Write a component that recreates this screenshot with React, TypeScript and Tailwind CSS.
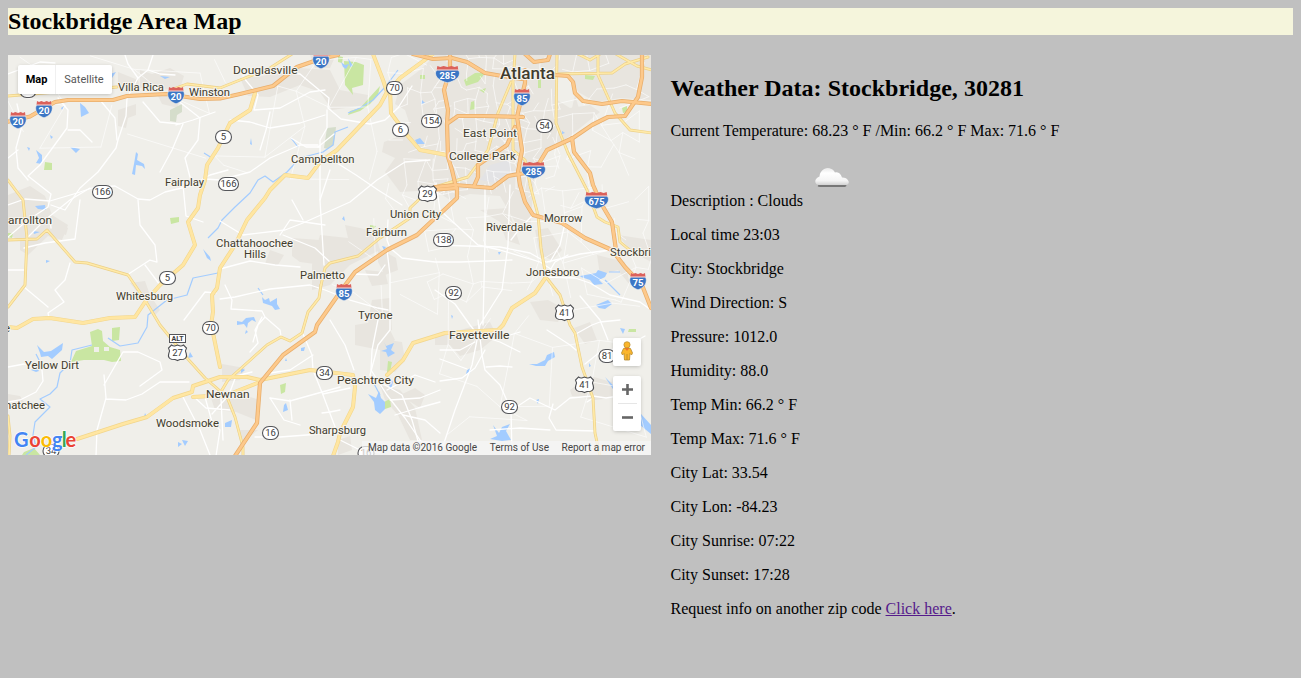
import React from "react";

/* ---------- map geometry, in page-aligned units ---------- */

const motorways: string[] = [
  "M8 121.7L30 116.5L55 102L68 100L113 100L127 96L167 94L200 99L220 98.5L240 94L273 86L297 67L320 59L338 55",
  "M413 54L433 59L452 58L467 62L485 73L502 76L522 79M555 75L568 76L573 82L575 93L583 101L602 104L622 101L652 104",
  "M450 54L450 70L444 90L448 110L447 123L448 157L452 170L456 187",
  "M448 123L458 116L482 116L523 117",
  "M525 70L525 83L517 117L522 150L518 172L520 185L525 202L533 215L562 223L585 238L612 250L625 267L642 285L651 308",
  "M515 127L507 145L478 165L478 177L474 186",
  "M435 187L455 185L492 188L508 176L525 173L538 165L547 150L573 138L592 125L608 117L625 116L638 97L642 77L642 54",
  "M572 138L574 152L590 173L593 185L602 205L612 222L616 250",
  "M430 190L457 188L457 198L442 212L433 220L417 235L387 250L355 272L343 288L317 325L315 332L283 355L260 383L257 423L235 456",
  "M525 54L534 62L548 60L550 54",
];

const highways: string[] = [
  "M373 54L383 80L387 92L380 105L337 150L320 162L308 178L285 175L270 190L265 198L247 220L235 245L220 268L217 288L212 295L213 312L211 325L213 333L220 367",
  "M433 54L400 78L390 90L391 113L407 135L420 150L447 155",
  "M255 93L250 110L230 123L218 148L207 165L205 180L200 195L198 208L188 222L195 245L183 265L160 285L145 302L135 317L110 318L83 323L50 318L33 319L17 328L8 327",
  "M77 439L123 424L147 417L173 398L192 392L193 386L220 377L247 377L260 380L310 370L353 375L355 387L353 407L340 433L338 442L333 456",
  "M260 382L227 395L193 397",
  "M387 375L403 360L413 343L445 333L498 330L503 325L512 308L535 293L546 277",
];

const secondary: string[] = [
  "M292 54L270 68L245 78L220 88L187 84L176 88M117 87L8 96",
  "M8 180L23 200L27 238L25 285L8 307",
  "M8 240L37 239L47 230L75 262L87 263L128 275L145 300L160 325L187 358L205 378L227 397L235 417L243 447L243 456",
  "M321 285L319 298L308 312L302 333L290 341L281 337L267 345L228 380L222 390",
  "M321 285L325 268L330 263L358 256L380 238L410 218L410 208L427 192L453 184",
  "M530 185L538 215L541 248L546 277L560 295L570 325L575 333L582 367L593 398L595 433L600 456",
  "M515 54L513 82L513 150L525 160L531 188",
  "M511 82L498 113L488 150L468 177L435 187",
  "M557 54L556 123L568 153L587 190L597 217L605 222L618 227L620 242L632 252",
  "M555 74L612 73L625 64L648 57M598 54L598 75L615 113L630 130L652 133M578 54L590 60L600 54M616 54L637 66L652 70",
  "M8 416L10 436L9 456",
];

const minor: string[] = [
  "M8 205L25 199L50 201L77 193L95 187L115 186L138 199L150 200L165 192L190 186L210 175L228 170",
  "M27 238L45 220L70 200L90 188",
  "M8 237L28 220L48 207L51 194L28 176L40 165L67 128L68 110L58 98",
  "M50 218L51 228M51 205L65 210L80 188L98 172L116 148L118 140L126 116L127 98L138 78L128 64L125 55",
  "M117 140L115 118L100 100M68 130L80 130L92 142M17 104L22 126L16 148L18 168L28 180",
  "M138 78L148 70L153 55M148 70L160 74L175 75M177 100L200 118L198 140L185 158L192 185",
  "M183 124L172 150L160 172M176 125L193 120L215 112M143 102L160 122L180 124",
  "M127 275L150 260L157 262L155 245L140 225L138 200M8 270L24 270M24 248L45 243L75 239L80 200",
  "M70 263L65 280L55 290L64 302L48 313L49 318M24 287L48 307",
  "M183 185L186 216L203 222M184 320L205 292L216 293M160 285L145 265",
  "M104 375L106 398L97 430L96 456M104 385L123 352L138 352L160 362L162 370L140 386M106 399L126 400L142 394L160 382L189 382",
  "M8 367L24 364L42 370L43 381L36 392L20 400L8 402M183 397L200 430L210 455M205 397L212 422L220 430L216 456",
  "M192 395L206 408L230 410M228 396L212 414M228 397L236 376L252 372M221 399L223 440",
  "M243 75L264 70L300 74L318 89L329 98L328 108L341 119L370 124L385 120L398 108L412 86",
  "M327 110L327 128L320 140L320 200L324 265",
  "M318 147L334 134M318 145L300 145L270 158L250 172L220 180L205 179",
  "M320 147L306 147L291 138M337 163L356 175L378 190L402 205",
  "M220 221L243 235L285 230L303 223L350 202L377 180L405 162L430 160",
  "M325 225L290 220L280 235M283 235L315 248L330 262M220 269L250 261L275 265L300 267",
  "M231 309L262 311L265 317L280 330L281 336M262 317L255 330L258 343L250 352M225 285L232 300L231 309M265 317L258 325L253 342",
  "M220 299L235 297L270 289L310 285L325 290L350 300L378 308L388 310",
  "M388 220L387 240L390 248L402 258L418 260L435 262L460 262L512 260",
  "M387 250L390 275L390 330L378 345L370 375L372 380",
  "M355 274L378 275L385 265M320 200L330 170M303 220L292 200",
  "M303 334L312 355L313 370L323 395L340 440L360 450L380 453",
  "M313 355L290 370L270 373M323 394L350 388M270 398L290 401L340 387M322 413L330 412L340 410",
  "M255 437L280 437L320 434L338 432M270 398L284 420L300 425M292 420L290 400",
  "M330 320L345 345L354 370M378 320L372 350L371 370L387 395L405 418L420 440L430 455",
  "M387 390L415 375L435 382M390 400L420 398L440 390M395 415L418 408L440 402",
  "M380 382L402 395L412 420L418 441L440 444M403 415L425 420L440 433",
  "M436 183L440 210L478 245L500 250L540 262L560 275",
  "M485 185L485 240L483 325M510 185L508 245L502 290L480 325L472 365L455 410L445 440L440 455",
  "M435 245L500 247L530 253L546 262M478 320L482 355L485 370L500 385L511 410L512 455",
  "M435 290L455 304L470 325L478 335L500 342L520 352M480 336L510 335L520 332",
  "M440 381L462 378L475 368L485 350M565 223L560 245L550 262M533 215L520 228L511 240",
  "M547 262L580 254L610 250M546 277L575 278L590 283L610 295L640 302L651 310",
  "M546 277L555 262L568 255M512 410L530 398L555 410L570 398L593 396L606 398L625 395",
  "M585 364L600 352L625 347L645 336M574 335L592 325L600 322L620 320M593 398L587 402",
  "M553 404L549 418L556 430L596 431M490 430L520 428L550 430M580 296L600 320L608 340",
  "M486 367L500 366L512 367M467 369L440 359M475 342L460 350L440 350M547 330L570 345L576 350",
  "M8 74L40 62L55 63M18 150L8 158M230 120L250 122L270 128L300 123L325 115",
  "M243 77L258 95L254 110L280 108L310 92L325 90M270 112L266 130L260 150",
];

type Region = { x: number; y: number; w: number; h: number; step: number; seed: number };
const streetRegions: Region[] = [
  { x: 437, y: 50, w: 120, h: 145, step: 10, seed: 7 },
  { x: 557, y: 50, w: 100, h: 160, step: 17, seed: 21 },
  { x: 392, y: 60, w: 48, h: 150, step: 15, seed: 5 },
  { x: 430, y: 195, w: 225, h: 105, step: 20, seed: 13 },
  { x: 435, y: 310, w: 215, h: 145, step: 40, seed: 3 },
  { x: 345, y: 220, w: 90, h: 110, step: 28, seed: 17 },
  { x: 225, y: 60, w: 160, h: 140, step: 40, seed: 11 },
  { x: 15, y: 60, w: 205, h: 130, step: 44, seed: 9 },
];

function streetNetwork({ x, y, w, h, step, seed }: Region): string {
  let s = seed * 7919;
  const rnd = () => {
    s = (s * 1103515245 + 12345) % 2147483648;
    return s / 2147483648;
  };
  const cols = Math.floor(w / step);
  const rows = Math.floor(h / step);
  const pts: number[][][] = [];
  for (let r = 0; r <= rows; r++) {
    pts.push([]);
    for (let c = 0; c <= cols; c++) {
      pts[r].push([x + (c + (rnd() - 0.5) * 0.9) * step, y + (r + (rnd() - 0.5) * 0.9) * step]);
    }
  }
  let d = "";
  const f = (p: number[]) => p[0].toFixed(1) + " " + p[1].toFixed(1);
  for (let r = 0; r <= rows; r++) {
    for (let c = 0; c <= cols; c++) {
      if (c < cols && rnd() > 0.38) d += `M${f(pts[r][c])}L${f(pts[r][c + 1])}`;
      if (r < rows && rnd() > 0.38) d += `M${f(pts[r][c])}L${f(pts[r + 1][c])}`;
    }
  }
  return d;
}

const urban: string[] = [
  "M435 55H557V100L570 108L590 105L600 112L570 136L548 150L535 168L530 230L515 222L500 196L470 194L450 200L435 190L400 192L385 172L395 158L382 152L384 142L400 136L410 125L405 110L395 104L400 85L420 70Z",
  "M557 55H651V100L620 98L596 102L578 92L572 76L557 73Z",
  "M575 95L580 112L578 125L570 118L572 108Z",
  "M140 70L152 74L170 68L184 76L180 88L160 90L140 88ZM118 72L138 80L140 90L118 88ZM158 96L180 94L178 108L162 104ZM118 110L136 104L136 115L128 118L126 128L118 126Z",
  "M8 195L30 186L45 196L52 215L68 225L62 240L48 236L28 255L20 250L20 240L8 235ZM60 223L68 228L66 235L58 232Z",
  "M240 78L262 76L300 68L330 70L340 90L368 95L366 105L332 110L320 92L300 85L270 97L248 96ZM310 55L335 57L330 68L315 68Z",
  "M292 238L320 240L322 265L300 262L292 256ZM320 235L348 238L345 225L360 228L375 232L380 250L350 265L330 285L312 290L312 265ZM270 250L284 255L278 265L265 264Z",
  "M378 248L396 258L398 270L385 275L378 262ZM365 270L385 272L388 284L372 286ZM372 300L390 298L392 330L378 335L368 322Z",
  "M355 325L385 320L395 340L380 350L355 345ZM388 340L402 342L405 360L395 372L380 370L380 350ZM380 385L400 390L415 408L422 440L410 440L398 415L385 400ZM400 395L415 388L425 395L420 408Z",
  "M460 330L490 322L497 336L480 350L460 356L450 345L435 345L435 336ZM530 302L548 300L563 308L558 322L540 320Z",
  "M574 328L590 322L597 340L585 344ZM570 390L590 376L612 382L612 398L595 400L572 396ZM535 230L548 228L562 250L552 260L540 255ZM480 210L508 208L512 220L520 245L506 240L500 222Z",
  "M597 255L625 262L630 285L618 270L600 275ZM618 235L651 240V262L630 250Z",
  "M222 364L245 368L240 380L222 382ZM210 395L240 394L260 400L256 420L236 412L215 410ZM240 430L258 430L240 445Z",
  "M130 283L145 281L150 295L160 310L155 315L145 302ZM338 440L350 436L352 450L338 455ZM8 394L20 396L24 402L14 410L8 408Z",
];

const greens: string[] = [
  "M344 61L356 62L364 65L363 85L352 88L353 95L345 85Z",
  "M338 56L343 57L342 63L338 62ZM464 80L475 73L486 72L478 82L466 86ZM471 102L474 101L475 109L470 110ZM538 80L541 79L541 88L538 88ZM472 85L480 90L486 88L484 93Z",
  "M380 86L378 95L370 104L360 111L348 115L350 111L360 108L369 98Z",
  "M45 162L52 163L52 170L44 170ZM170 218L179 217L179 222L171 224Z",
  "M90 332L98 329L102 331L103 341L110 347L120 350L121 361L112 362L104 360L84 360L71 362L76 351L92 346ZM112 328L120 327L119 340L112 341Z",
  "M8 233L13 233L12 238L8 237ZM388 361L392 362L390 372L387 372ZM384 402L390 399L391 407L385 409ZM280 385L286 383L285 392L281 394ZM370 225L376 226L374 229L370 228Z",
  "M24 452L34 448L40 455H22ZM629 329H636V332H628ZM585 75L595 76L593 80L585 79ZM420 75L425 75L425 79L420 79ZM622 108L627 106L627 112L623 113Z",
];

const palegreens = "M170 110L182 104L182 112L177 115L176 122L170 121ZM327 128L336 127L334 145L328 149L324 148Z";

const lakes: string[] = [
  "M80 103L85 107L89 113L81 117ZM110 74L116 72L112 78ZM160 76L170 77L165 79ZM27 147L30 148L29 151ZM36 150L42 155L42 164L36 163L39 158Z",
  "M136 152L138 154L137 160L144 164L145 169L142 166L136 165L135 175L132 174L134 164ZM70 147L80 149L76 153ZM50 135L53 137L51 139ZM61 108L64 106L62 110Z",
  "M35 206L45 205L46 210L38 209ZM33 231L40 232L34 234ZM46 260L50 261L46 263ZM37 345L44 352L51 351L63 343L62 350L52 359L48 356L41 357L40 353Z",
  "M31 370L36 367L39 371L36 372ZM203 249L210 257L211 261L207 258ZM341 62L345 65L349 64L346 69L343 67ZM348 58L353 66L350 67ZM251 138L252 145L250 144Z",
  "M262 297L265 300L269 298L270 302L277 298L277 304L280 309L275 310L272 306L263 303ZM237 321L242 322L246 318L254 317L256 322L252 320L248 323L247 328L244 324L237 325ZM246 330L248 332L245 334ZM301 348L305 347L304 351L301 351Z",
  "M284 405L286 403L288 410L283 412ZM384 342L386 346L394 343L391 350L395 353L388 357L386 352L381 351L387 349Z",
  "M368 394L376 398L379 391L381 398L385 402L385 409L380 414L375 410L374 402Z",
  "M390 377L393 382L391 390L389 385ZM415 140L420 138L425 144L417 144ZM422 100L425 103L421 104ZM451 315L453 316L452 319ZM498 252L501 252L499 255Z",
  "M580 276L596 273L598 270L607 273L605 277L599 280L603 284L594 285L590 280L581 277ZM596 305L608 300L612 304L605 309L599 308ZM562 131L565 133L562 134Z",
  "M529 364L537 364L545 360L547 355L554 352L555 357L548 361L545 366L536 366ZM620 328L625 329L623 334ZM493 425L499 433L502 427L510 424L506 431L511 440L502 441L490 439L497 436Z",
  "M605 377L641 414L651 425V434L640 425L632 418ZM589 363L591 366L589 367ZM536 400L539 399L538 404ZM467 370L471 368L470 373L466 374ZM182 440L188 441L185 446ZM178 442L182 444L178 447Z",
  "M190 352L193 357L188 358ZM145 413L147 417L144 417ZM286 358L287 361L285 361ZM240 445L243 447L240 448ZM344 216L345 221L342 219ZM382 246L386 247L384 250Z",
  "M225 423L232 420L231 427L225 427ZM241 368L245 370L241 373ZM238 323L236 327",
];

const rivers: string[] = [
  "M398 70L386 86L373 100L360 108L348 113M348 127L335 132L333 145L323 152L300 158L287 172L273 182L265 176L258 180L250 193L235 207L222 220L218 228L208 238",
  "M218 273L193 278L187 295L167 300L148 315L147 327L138 343L120 346L108 338",
  "M92 345L72 350L70 363L60 373L57 387L50 394L40 399L50 407L35 422L33 435L36 447L26 455",
  "M36 354L40 362L38 370M263 295L258 288M380 395L372 380M605 280L620 295M291 138L298 147M630 404L622 395M204 153L212 158M376 110L382 100M620 272L609 272",
];

type Label = { t: string; x: number; y: number; w: number; size?: number };
const labels: Label[] = [
  { t: "Douglasville", x: 233, y: 74, w: 64.5 },
  { t: "Villa Rica", x: 118, y: 91, w: 46 },
  { t: "Winston", x: 189, y: 96, w: 41 },
  { t: "Campbellton", x: 291, y: 163, w: 63.5 },
  { t: "Fairplay", x: 165, y: 186, w: 39 },
  { t: "East Point", x: 463, y: 137, w: 54 },
  { t: "College Park", x: 449, y: 160, w: 67 },
  { t: "arrollton", x: 8, y: 224, w: 44 },
  { t: "Union City", x: 390, y: 218, w: 51 },
  { t: "Fairburn", x: 366, y: 236, w: 41 },
  { t: "Chattahoochee", x: 216, y: 247, w: 77 },
  { t: "Hills", x: 244, y: 258, w: 22 },
  { t: "Riverdale", x: 486, y: 231, w: 46 },
  { t: "Morrow", x: 544, y: 222, w: 38.5 },
  { t: "Stockbri", x: 610, y: 256, w: 41 },
  { t: "Jonesboro", x: 526, y: 276, w: 53.5 },
  { t: "Palmetto", x: 300, y: 279, w: 45 },
  { t: "Whitesburg", x: 116, y: 300, w: 57 },
  { t: "Tyrone", x: 358, y: 319, w: 34.5 },
  { t: "Fayetteville", x: 449, y: 339, w: 60.5 },
  { t: "Yellow Dirt", x: 25, y: 369, w: 54 },
  { t: "Peachtree City", x: 337, y: 384, w: 77 },
  { t: "Newnan", x: 206, y: 398, w: 43.5 },
  { t: "hatchee", x: 5, y: 409, w: 40 },
  { t: "e", x: 4, y: 332, w: 6 },
  { t: "Woodsmoke", x: 156, y: 427, w: 63 },
  { t: "Sharpsburg", x: 309, y: 434, w: 57 },
  { t: "Atlanta", x: 500, y: 79, w: 55, size: 16 },
];

const routes: [string, number, number][] = [
  ["5", 223.5, 137], ["70", 394.5, 88], ["6", 400.5, 130], ["154", 431.5, 121], ["54", 544.5, 126],
  ["166", 228.5, 184], ["166", 102.5, 192], ["138", 443.5, 240], ["5", 167.5, 278], ["92", 453.5, 293],
  ["70", 210.5, 328], ["81", 607, 356], ["34", 324.5, 373], ["92", 509.5, 407], ["16", 270.5, 433],
  ["34", 51, 451], ["16", 366, 453], ["8", 28, 91],
];
const usRoutes: [string, number, number][] = [
  ["29", 427.5, 193.5], ["41", 564.5, 312.5], ["27", 177.5, 352.5], ["41", 584.5, 384.5],
];
const interstates: [string, number, number][] = [
  ["20", 18, 120], ["20", 44, 109], ["20", 176, 95], ["20", 321, 60], ["285", 447.5, 74], ["85", 522, 97],
  ["285", 533.5, 170], ["675", 596.5, 200], ["75", 638, 281], ["85", 344, 292],
];

function Interstate({ n, x, y }: { n: string; x: number; y: number }) {
  const k = n.length > 2 ? 1.45 : 1;
  return (
    <g transform={`translate(${x} ${y})`}>
      <g transform={`scale(${k} 1)`}>
        <path d="M-7 -5L-8.2 -2C-8.8 3 -5.5 7 0 8.7C5.500 7 8.800 3 8.200 -2L7 -5Z" fill="#3b76c5" stroke="#f5f3ee" strokeWidth=".5" />
        <path d="M-7.500 -3.800L-7 -8L-5 -7L-2.700 -8L0 -7L2.700 -8L5 -7L7 -8L7.500 -3.800Z" fill="#db615b" />
        <path d="M-7.700 -4H7.700" stroke="#fff" strokeWidth=".8" />
      </g>
      <text y="4.600" textAnchor="middle" fill="#fff" fontSize="9.500" fontWeight="700" textLength={n.length > 2 ? 16 : 11} lengthAdjust="spacingAndGlyphs">{n}</text>
    </g>
  );
}

function StateRoute({ n, x, y }: { n: string; x: number; y: number }) {
  const w = n.length > 2 ? 20 : 16;
  return (
    <g>
      <rect x={x - w / 2} y={y - 6.5} width={w} height="13" rx="6.500" fill="#fff" stroke="#55565a" strokeWidth="1.100" />
      <text x={x} y={y + 3.4} textAnchor="middle" fill="#3c3c3c" fontSize="9.500">{n}</text>
    </g>
  );
}

function UsRoute({ n, x, y }: { n: string; x: number; y: number }) {
  return (
    <g transform={`translate(${x} ${y})`}>
      <path d="M-6 -7.500Q-4 -6 -2 -6.800L0 -7.500L2 -6.800Q4 -6 6 -7.500L9 -4.500Q7.300 -2 8.700 1Q10 5.500 6 6.800Q2 6.800 0 8Q-2 6.800 -6 6.800Q-10 5.500 -8.700 1Q-7.300 -2 -9 -4.500Z" fill="#fff" stroke="#4c4d50" strokeWidth="1.100" />
      <text y="3.800" textAnchor="middle" fill="#3c3c3c" fontSize="9.500">{n}</text>
    </g>
  );
}

/* letter, colour, left edge */
const LOGO: [string, string, number][] = [
  ["G", "#4285f4", 14], ["o", "#ea4335", 29.3], ["o", "#fbbc05", 40.7], ["g", "#4285f4", 52], ["l", "#34a853", 61.8], ["e", "#ea4335", 65.6],
];

function MapDrawing() {
  return (
    <svg className="block font-[Roboto,sans-serif]" width="643" height="400" viewBox="8 55 643 400">
      <rect x="8" y="55" width="643" height="400" fill="#f0efea" />
      <g fill="#e8e5df">{urban.map((d, i) => <path key={i} d={d} />)}</g>
      <path d="M480 180L490 165L508 160L514 172L500 184Z" fill="#e3e3e5" />
      <path d={palegreens} fill="#d5ddcb" />
      <g fill="#c9e6a2">{greens.map((d, i) => <path key={i} d={d} />)}</g>
      <path d="M94 347H99V352H94ZM104 347H109V351H104Z" fill="#f0efea" />
      <g fill="#a3ccff">{lakes.map((d, i) => <path key={i} d={d} />)}</g>
      <g fill="none" stroke="#a3ccff" strokeWidth="1.200" strokeLinejoin="round">{rivers.map((d, i) => <path key={i} d={d} />)}</g>
      <g fill="none" stroke="#fff" strokeLinejoin="round" strokeLinecap="round">
        <g strokeWidth=".9" opacity=".7">{streetRegions.map((r, i) => <path key={i} d={streetNetwork(r)} />)}</g>
        <g strokeWidth="1.300">{minor.map((d, i) => <path key={i} d={d} />)}</g>
      </g>
      <g fill="none" strokeLinejoin="round" strokeLinecap="round">
        <g stroke="#ecd088" strokeWidth="2.900">{secondary.map((d, i) => <path key={i} d={d} />)}</g>
        <g stroke="#f2d68c" strokeWidth="4">{highways.map((d, i) => <path key={i} d={d} />)}</g>
        <g stroke="#ffeaa8" strokeWidth="1.600">{secondary.map((d, i) => <path key={i} d={d} />)}</g>
        <g stroke="#ffe6a2" strokeWidth="2.800">{highways.map((d, i) => <path key={i} d={d} />)}</g>
        <g stroke="#e8ae6c" strokeWidth="4.200">{motorways.map((d, i) => <path key={i} d={d} />)}</g>
        <g stroke="#fdc98b" strokeWidth="2.700">{motorways.map((d, i) => <path key={i} d={d} />)}</g>
      </g>
      {routes.map(([n, x, y], i) => <StateRoute key={i} n={n} x={x} y={y} />)}
      {usRoutes.map(([n, x, y], i) => <UsRoute key={i} n={n} x={x} y={y} />)}
      <rect x="169.500" y="334.500" width="16" height="8" fill="#fff" stroke="#55565a" />
      <text x="177.500" y="341.300" fontSize="7" fontWeight="700" textAnchor="middle" fill="#3c3c3c">ALT</text>
      {interstates.map(([n, x, y], i) => <Interstate key={i} n={n} x={x} y={y} />)}
      <g fill="#413c2d" stroke="#f6f4ef" strokeWidth="2.200" strokeLinejoin="round" paintOrder="stroke">
        {labels.map((l) => (
          <text key={l.t} x={l.x} y={l.y} fontSize={l.size ?? 11} fontWeight={l.size ? 500 : 400} textLength={l.w} lengthAdjust="spacingAndGlyphs">{l.t}</text>
        ))}
      </g>
      <text className="font-[Lato,sans-serif]" y="447.300" fontSize="20" fontWeight="700" stroke="#fff" strokeWidth="1.600" strokeOpacity=".8" paintOrder="stroke">
        {LOGO.map(([c, fill, x], i) => <tspan key={i} x={x} fill={fill}>{c}</tspan>)}
      </text>
    </svg>
  );
}

function Pegman() {
  return (
    <svg className="mb-0.5" width="14" height="20" viewBox="0 0 14 20">
      <path d="M3.500 7.500Q7 5.500 10.500 7.500L12.500 12L11.500 14L10 12.500L9.500 19H4.500L4 12.500L2.500 14L1.500 12Z" fill="#fbb62c" stroke="#b5892f" strokeWidth=".8" />
      <circle cx="7" cy="3.800" r="3.100" fill="#fbb62c" stroke="#b5892f" strokeWidth=".7" />
      <path d="M4.500 7L7 10L9.500 7Z" fill="#e9782c" />
      <path d="M7 13V19" stroke="#b5892f" strokeWidth=".8" />
    </svg>
  );
}

function StockbridgeMap() {
  return (
    <div className="relative h-[400px] w-[643px] shrink-0 overflow-hidden font-[Roboto,sans-serif]">
      <MapDrawing />
      <div className="absolute left-[10px] top-[10px] flex h-[29px] items-center rounded-[2px] bg-white text-[11px] leading-[29px] shadow-[0_1px_4px_-1px_rgba(0,0,0,0.3)]">
        <span className="w-[38px] border-r border-[#f0f0f0] text-center font-bold text-black">Map</span>
        <span className="w-[56px] text-center text-[#565656]">Satellite</span>
      </div>
      <div className="absolute left-[605px] top-[283px] flex size-[28px] items-center justify-center rounded-[2px] bg-white shadow-[0_1px_4px_-1px_rgba(0,0,0,0.3)]">
        <Pegman />
      </div>
      <div className="absolute left-[605px] top-[321px] flex h-[55px] w-[28px] flex-col items-center rounded-[2px] bg-white shadow-[0_1px_4px_-1px_rgba(0,0,0,0.3)]">
        <svg width="28" height="27" viewBox="0 0 28 27"><path d="M9 13.500H20M14.500 8V19" stroke="#666" strokeWidth="2.600" /></svg>
        <div className="h-px w-[19px] bg-[#e6e6e6]" />
        <svg width="28" height="27" viewBox="0 0 28 27"><path d="M9 13.500H20" stroke="#666" strokeWidth="2.600" /></svg>
      </div>
      <div className="absolute bottom-0 right-0 flex h-[14px] whitespace-nowrap bg-[#f5f5f5]/75 text-[10px] leading-[14px] text-[#444]">
        <span className="w-[115px] text-right">Map data ©2016 Google</span>
        <span className="w-[72px] text-right">Terms of Use</span>
        <span className="w-[96px] text-right">Report a map error</span>
        <span className="w-[6px]" />
      </div>
    </div>
  );
}

function CloudIcon() {
  return (
    <svg className="ml-1 inline-block align-baseline" width="50" height="50" viewBox="0 0 50 50">
      <defs>
        <linearGradient id="cloud" x1="0" y1="0" x2="0" y2="1">
          <stop offset="0" stopColor="#e9e9e9" />
          <stop offset=".3" stopColor="#fff" />
          <stop offset=".75" stopColor="#f4f4f4" />
          <stop offset="1" stopColor="#d2d2d2" />
        </linearGradient>
      </defs>
      <path d="M12 28.500H38Q41 29.500 38 31H13Q9 30.500 12 28.500Z" fill="#777" />
      <path d="M12.500 29C7 29 6.800 22.500 12.500 20.500C13 14 19 10 24.500 13C26.500 14 27.500 15.500 28 16.500C31 15.200 34 17.500 35 21.500C39 21 42 24.500 41.800 26.500C41.500 28.500 40 29 38 29Z" fill="url(#cloud)" />
    </svg>
  );
}

const readings = [
  "Local time 23:03",
  "City: Stockbridge",
  "Wind Direction: S",
  "Pressure: 1012.0",
  "Humidity: 88.0",
  "Temp Min: 66.2 ° F",
  "Temp Max: 71.6 ° F",
  "City Lat: 33.54",
  "City Lon: -84.23",
  "City Sunrise: 07:22",
  "City Sunset: 17:28",
];

export default function App() {
  return (
    <div className="min-h-screen bg-[#c0c0c0] p-2 font-['Liberation_Serif',serif] text-base leading-[18px] text-black">
      <h2 className="mb-5 h-[27px] bg-[#f5f5dc] text-2xl leading-[27px] font-bold tracking-[0.04px]">Stockbridge Area Map</h2>
      <div className="flex gap-[19.500px]">
        <StockbridgeMap />
        <section className="flex flex-col gap-4 pt-5">
          <h2 className="mb-1 text-2xl leading-[27px] font-bold tracking-[0.02px]">Weather Data: Stockbridge, 30281</h2>
          <p>Current Temperature: 68.23 ° F /Min: 66.2 ° F Max: 71.6 ° F</p>
          <p className="h-[54px]">Description : Clouds<CloudIcon /></p>
          {readings.map((r) => <p key={r}>{r}</p>)}
          <p>Request info on another zip code <a href="#" className="text-[#551a8b] underline">Click here</a>.</p>
        </section>
      </div>
    </div>
  );
}
